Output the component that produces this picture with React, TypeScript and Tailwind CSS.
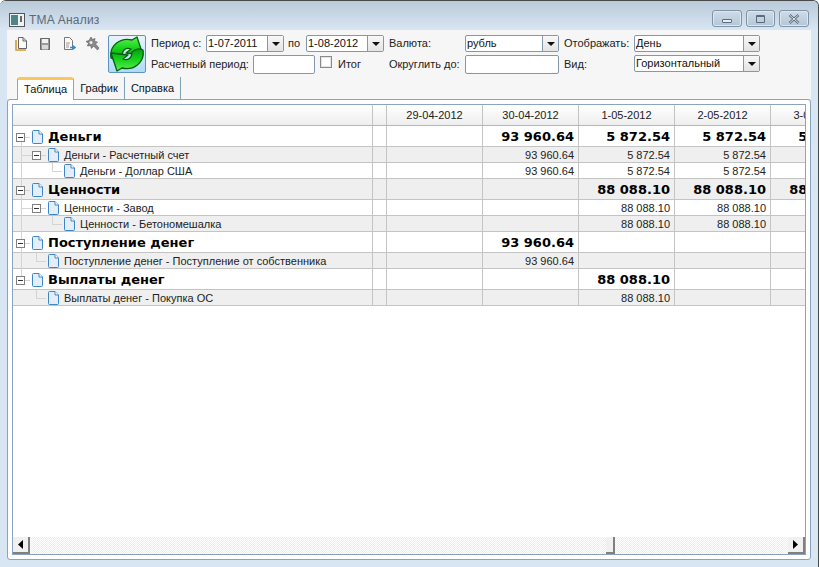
import type { ReactNode } from 'react';

type Row = {
  title: string;
  level: 0 | 1 | 2;
  leaf?: boolean;
  up?: boolean;
  down?: boolean;
  values: [string, string, string, string];
};

const rows: Row[] = [
  { title: 'Деньги', level: 0, down: true, values: ['93 960.64', '5 872.54', '5 872.54', '5 872.54'] },
  { title: 'Деньги - Расчетный счет', level: 1, up: true, down: true, values: ['93 960.64', '5 872.54', '5 872.54', '5 872.54'] },
  { title: 'Деньги - Доллар США', level: 2, leaf: true, up: true, down: true, values: ['93 960.64', '5 872.54', '5 872.54', '5 872.54'] },
  { title: 'Ценности', level: 0, up: true, down: true, values: ['', '88 088.10', '88 088.10', '88 088.10'] },
  { title: 'Ценности - Завод', level: 1, up: true, down: true, values: ['', '88 088.10', '88 088.10', '88 088.10'] },
  { title: 'Ценности - Бетономешалка', level: 2, leaf: true, up: true, down: true, values: ['', '88 088.10', '88 088.10', '88 088.10'] },
  { title: 'Поступление денег', level: 0, up: true, down: true, values: ['93 960.64', '', '', ''] },
  { title: 'Поступление денег - Поступление от собственника', level: 1, leaf: true, up: true, down: true, values: ['93 960.64', '', '', ''] },
  { title: 'Выплаты денег', level: 0, up: true, values: ['', '88 088.10', '', ''] },
  { title: 'Выплаты денег - Покупка ОС', level: 1, leaf: true, values: ['', '88 088.10', '', ''] },
];

const dates = ['29-04-2012', '30-04-2012', '1-05-2012', '2-05-2012', '3-05-2012'];

function DocIcon() {
  return (
    <svg width="11" height="14" viewBox="0 0 11 14" className="shrink-0">
      <path d="M0.5 1.5 Q0.5 0.5 1.5 0.5 H7 L10.5 4 V12.5 Q10.5 13.5 9.5 13.5 H1.5 Q0.5 13.5 0.5 12.5 Z" fill="#e4eefa" stroke="#3f86c8" />
      <path d="M7 0.5 V4 H10.5" fill="#ffffff" stroke="#3f86c8" />
    </svg>
  );
}

function Expander() {
  return (
    <span className="absolute left-0 top-1/2 -mt-[4px] w-[9px] h-[9px] border border-[#808080] bg-white flex items-center justify-center">
      <span className="w-[5px] h-px bg-[#333]" />
    </span>
  );
}

function TreeLines({ row }: { row: Row }) {
  const leafLeft = row.level === 2 ? 'left-[39px]' : 'left-[23px]';
  return (
    <>
      {row.up && <span className="absolute left-[8px] top-0 h-1/2 w-px bg-[#d4d4d4]" />}
      {row.down && <span className="absolute left-[8px] top-1/2 h-[55%] w-px bg-[#d4d4d4]" />}
      {row.leaf && <span className={`absolute ${leafLeft} top-0 h-1/2 w-px bg-[#d4d4d4]`} />}
      {row.leaf && <span className={`absolute ${leafLeft} top-1/2 h-px w-[10px] bg-[#d4d4d4]`} />}
      {row.level === 1 && !row.leaf && <span className="absolute left-[8px] top-1/2 h-px w-[12px] bg-[#d4d4d4]" />}
    </>
  );
}

function TableRow({ row, index }: { row: Row; index: number }) {
  const bold = row.level === 0;
  const bg = index % 2 === 1 ? 'bg-[#efefef]' : 'bg-white';
  const h = bold ? 'h-[21px]' : 'h-[16px]';
  const valueText = bold
    ? "font-['DejaVu_Sans',sans-serif] font-bold text-[13px] text-black"
    : 'text-[11px] text-[#222]';
  const levelMargin = row.level === 0 ? 'ml-[3px]' : row.level === 1 ? 'ml-[19px]' : 'ml-[35px]';
  return (
    <div className={`flex ${h} ${bg} border-b border-[#c4c4c4] shrink-0`}>
      <div className="relative w-[360px] shrink-0 border-r border-[#c4c4c4] flex items-center pt-px">
        <TreeLines row={row} />
        <div className={`${levelMargin} relative w-[16px] h-full shrink-0`}>
          {!row.leaf && <Expander />}
          {!row.leaf && <span className="absolute left-[9px] top-1/2 h-px w-[5px] bg-[#d4d4d4]" />}
        </div>
        <div className="w-[16px] shrink-0">
          <DocIcon />
        </div>
        <span
          className={
            bold
              ? "font-['DejaVu_Sans',sans-serif] font-bold text-[13px] text-black whitespace-nowrap"
              : 'text-[11px] text-[#222] whitespace-nowrap'
          }
        >
          {row.title}
        </span>
      </div>
      <div className="w-[14px] shrink-0 border-r border-[#c4c4c4]" />
      <div className="w-[96px] shrink-0 border-r border-[#c4c4c4]" />
      {row.values.map((v, i) => (
        <div
          key={i}
          className={`w-[96px] shrink-0 border-r border-[#c4c4c4] pr-[4px] pt-px flex items-center justify-end whitespace-nowrap ${valueText}`}
        >
          {v}
        </div>
      ))}
    </div>
  );
}

function ComboBox({ value, className }: { value: string; className: string }) {
  return (
    <div className={`${className} h-[17px] flex bg-white border border-[#8497ad] rounded-[2px] shrink-0`}>
      <span className="flex-1 pl-px text-[11px] leading-[15px] text-[#111] overflow-hidden whitespace-nowrap">{value}</span>
      <span className="w-[16px] border-l border-[#8497ad] bg-gradient-to-b from-[#f8f8f8] to-[#e4e4e4] flex items-center justify-center">
        <svg width="8" height="4" viewBox="0 0 8 4">
          <path d="M0 0 H8 L4 4 Z" fill="#111" />
        </svg>
      </span>
    </div>
  );
}

function TextInput({ className }: { className: string }) {
  return <div className={`${className} h-[19px] bg-white border border-[#8497ad] rounded-[2px] shrink-0`} />;
}

function Label({ className, children }: { className: string; children: ReactNode }) {
  return <span className={`${className} text-[11px] text-[#222] whitespace-nowrap shrink-0`}>{children}</span>;
}

function ToolIcons() {
  return (
    <div className="flex w-[93px] gap-[8px] pt-[1px] -ml-[2px] mr-[2px] shrink-0 items-start">
      <svg width="16" height="16" viewBox="0 0 16 16">
        <path d="M5.5 1.5 H10 L13.5 5 V12.5 H5.5 Z" fill="#fafafa" stroke="#666" />
        <path d="M10 1.5 V5 H13.5" fill="none" stroke="#666" />
        <path d="M3 4 V14 H13" fill="none" stroke="#d99a2b" strokeWidth="1.6" />
      </svg>
      <svg width="16" height="16" viewBox="0 0 16 16">
        <path d="M3.5 2.5 H12.5 V13.5 H3.5 Z" fill="#9a9a9a" stroke="#666" />
        <rect x="5" y="3" width="6" height="4" fill="#f2f2f2" />
        <rect x="5" y="9" width="6" height="4.5" fill="#d8d8d8" />
      </svg>
      <svg width="16" height="16" viewBox="0 0 16 16">
        <path d="M3.5 1.5 H8.5 L11.5 4.5 V13.5 H3.5 Z" fill="#fafafa" stroke="#777" />
        <path d="M5 7 H9 M5 9 H8 M5 11 H8" stroke="#999" />
        <path d="M9 11.5 H13 M11.5 9.5 L14 11.5 L11.5 13.5" fill="none" stroke="#3a86d0" strokeWidth="1.6" />
      </svg>
      <svg width="16" height="16" viewBox="0 0 16 16">
        <path d="M6 1 L7.5 3.5 L10 2.5 L9.5 5.5 L12.5 6 L10.5 8 L14 12 L12.5 14 L8.5 10 L6.5 12.5 L5.5 9.5 L2.5 10 L3.5 7 L1 5.5 L4 4.5 Z" fill="#8a8a8a" stroke="#555" strokeWidth="0.6" />
        <circle cx="6" cy="6.5" r="1.5" fill="#eee" />
      </svg>
    </div>
  );
}

function RefreshButton() {
  const arrow = 'M2 22 C0 9 12 1 23 4 L28 1 L34 19 L17 17 L22 13 C17 11 13 14 13 20 Q7 25 2 22 Z';
  return (
    <div className="w-[38px] h-[38px] shrink-0 rounded-[2px] border border-[#5f93bd] bg-gradient-to-b from-[#e8f3fb] to-[#aedbf7] flex items-center justify-center">
      <svg width="36" height="36" viewBox="0 0 36 36">
        <defs>
          <linearGradient id="arrowGreen" x1="0" y1="0" x2="0" y2="1">
            <stop offset="0" stopColor="#5cf050" />
            <stop offset="0.55" stopColor="#12d018" />
            <stop offset="1" stopColor="#0a9a16" />
          </linearGradient>
        </defs>
        <path d={arrow} fill="url(#arrowGreen)" stroke="#0a5c12" strokeWidth="1.3" strokeLinejoin="round" />
        <path d={arrow} transform="rotate(180 18 18)" fill="url(#arrowGreen)" stroke="#0a5c12" strokeWidth="1.3" strokeLinejoin="round" />
      </svg>
    </div>
  );
}

function Toolbar() {
  return (
    <div className="h-[47px] flex pl-[8px] pt-[5px] bg-[#f6f6f6] shrink-0">
      <ToolIcons />
      <RefreshButton />
      <div className="flex flex-col ml-[5px] gap-[3px]">
        <div className="flex items-center h-[17px]">
          <Label className="w-[55px]">Период с:</Label>
          <ComboBox className="w-[78px]" value="1-07-2011" />
          <Label className="w-[22px] pl-[4px]">по</Label>
          <ComboBox className="w-[78px]" value="1-08-2012" />
          <Label className="w-[81px] pl-[5px]">Валюта:</Label>
          <ComboBox className="w-[94px]" value="рубль" />
          <Label className="w-[75px] pl-[5px]">Отображать:</Label>
          <ComboBox className="w-[126px]" value="День" />
        </div>
        <div className="flex items-center h-[19px]">
          <Label className="w-[102px]">Расчетный период:</Label>
          <TextInput className="w-[62px]" />
          <span className="ml-[5px] self-start mt-px w-[12px] h-[12px] border border-[#8a8a8a] bg-white shadow-[inset_0_0_0_1px_#e4e4e4] shrink-0" />
          <Label className="w-[57px] pl-[6px]">Итог</Label>
          <Label className="w-[76px]">Округлить до:</Label>
          <TextInput className="w-[94px]" />
          <Label className="w-[75px] pl-[5px]">Вид:</Label>
          <ComboBox className="w-[126px] self-start" value="Горизонтальный" />
        </div>
      </div>
    </div>
  );
}

function Tabs() {
  return (
    <div className="h-[22px] flex pl-[10px] bg-[#f6f6f6] shrink-0 relative z-10">
      <div className="w-[57px] h-[23px] pb-px rounded-t-[3px] border border-b-0 border-[#8fa5ba] border-t-[3px] border-t-[#fcc65c] bg-white text-[11px] text-[#111] flex items-center justify-center">
        Таблица
      </div>
      <div className="w-[51px] h-[22px] pt-px border-r border-[#7da1b5] text-[11px] text-[#111] flex items-center justify-center">
        График
      </div>
      <div className="w-[56px] h-[22px] pt-px border-r border-[#7da1b5] text-[11px] text-[#111] flex items-center justify-center">
        Справка
      </div>
    </div>
  );
}

function Grid() {
  return (
    <div className="flex-1 min-h-0 flex flex-col border border-[#8ba3bd] bg-white overflow-hidden">
      <div className="flex h-[21px] shrink-0 border-b border-[#b4b8bc] bg-gradient-to-b from-white to-[#eeeeee]">
        <div className="w-[360px] shrink-0 border-r border-[#c4c4c4]" />
        <div className="w-[14px] shrink-0 border-r border-[#c4c4c4]" />
        {dates.map((d) => (
          <div key={d} className="w-[96px] shrink-0 border-r border-[#c4c4c4] text-[11px] text-[#222] flex items-center justify-center whitespace-nowrap">
            {d}
          </div>
        ))}
      </div>
      <div className="flex-1 min-h-0 flex flex-col">
        {rows.map((row, i) => (
          <TableRow key={row.title} row={row} index={i} />
        ))}
      </div>
      <div className="h-[17px] shrink-0 flex items-stretch bg-[repeating-conic-gradient(#ececec_0_25%,#ffffff_0_50%)] bg-[length:2px_2px]">
        <div className="w-[17px] bg-[#f0f0f0] border-r-2 border-b-2 border-[#808080] flex items-center justify-center">
          <svg width="5" height="9" viewBox="0 0 5 9"><path d="M5 0 V9 L0 4.5 Z" fill="#000" /></svg>
        </div>
        <div className="ml-[576px] w-[9px] bg-[#f0f0f0] border-r-2 border-b-2 border-[#808080]" />
        <div className="ml-auto w-[17px] bg-[#f0f0f0] border-r-2 border-b-2 border-[#808080] flex items-center justify-center">
          <svg width="5" height="9" viewBox="0 0 5 9"><path d="M0 0 V9 L5 4.5 Z" fill="#000" /></svg>
        </div>
      </div>
    </div>
  );
}

function WindowButton({ children, className }: { children: ReactNode; className: string }) {
  return (
    <div className={`${className} h-[17px] rounded-[3px] border border-[#7f93a6] shadow-[inset_0_0_0_1px_#dde7f0] bg-gradient-to-b from-[#cfdce8] to-[#b4c6d6] flex items-center justify-center`}>
      {children}
    </div>
  );
}

export default function App() {
  return (
    <div className="w-[819px] h-[567px] flex flex-col overflow-hidden bg-[#d8e5f2] border-t border-r border-[#4a4a4a] rounded-t-[6px] font-['Liberation_Sans',sans-serif]">
      <div className="h-[29px] shrink-0 flex bg-gradient-to-b from-[#b9cada] to-[#d9e6f3] pl-[9px] pr-[9px]">
        <div className="flex items-center gap-[4px] pt-[8px]">
          <svg width="16" height="14" viewBox="0 0 16 14">
            <rect x="0.5" y="0.5" width="15" height="13" fill="#eef2f5" stroke="#555" />
            <rect x="2" y="2" width="7" height="10" fill="#4f8585" />
            <rect x="11" y="3" width="2" height="6" fill="#666" />
          </svg>
          <span className="text-[12px] tracking-[0.2px] text-[#5c6b78]">TMA Анализ</span>
        </div>
        <div className="ml-auto flex gap-[4px] pt-[9px]">
          <WindowButton className="w-[30px]">
            <span className="w-[10px] h-[4px] mt-[5px] bg-[#e8eef4] border border-[#5a6b7a] rounded-[1px]" />
          </WindowButton>
          <WindowButton className="w-[29px]">
            <span className="w-[9px] h-[8px] border border-t-2 border-[#5a6b7a] rounded-[1px]" />
          </WindowButton>
          <WindowButton className="w-[30px]">
            <svg width="12" height="10" viewBox="0 0 12 10">
              <path d="M1.5 1 L10.5 9 M10.5 1 L1.5 9" stroke="#5a6b7a" strokeWidth="2.4" />
              <path d="M1.5 1 L10.5 9 M10.5 1 L1.5 9" stroke="#eef2f6" strokeWidth="0.9" />
            </svg>
          </WindowButton>
        </div>
      </div>
      <div className="flex-1 min-h-0 flex flex-col mx-[7px] mb-[7px]">
        <Toolbar />
        <Tabs />
        <div className="flex-1 min-h-0 flex border border-[#8ba3bd] rounded-[3px] bg-white p-[4px]">
          <Grid />
        </div>
      </div>
    </div>
  );
}
